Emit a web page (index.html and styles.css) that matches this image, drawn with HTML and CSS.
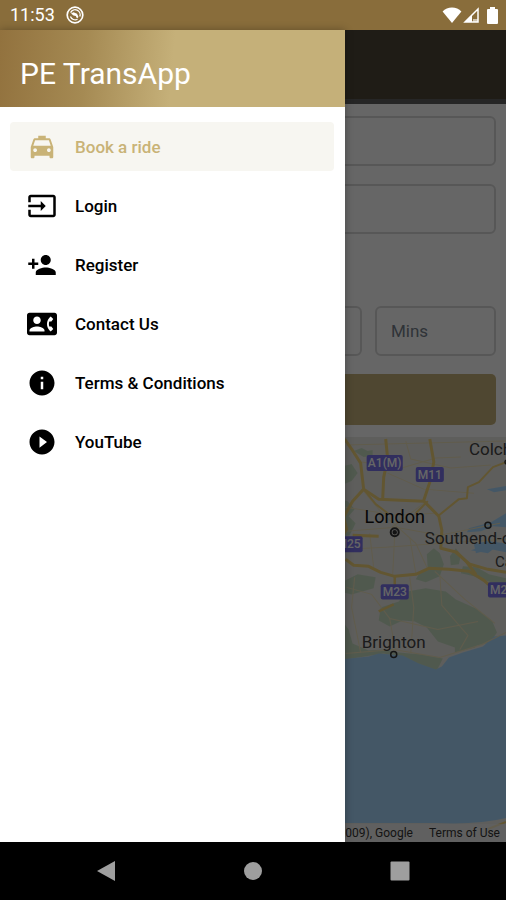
FILE: index.html
```html
<!DOCTYPE html>
<html lang="en">
<head>
<meta charset="UTF-8">
<meta name="viewport" content="width=device-width, initial-scale=1.0">
<title>PE TransApp</title>
<link rel="stylesheet" href="styles.css">
</head>
<body>
<div class="status-bar">
    <span class="time">11:53</span>
    <svg class="status-app" viewBox="0 0 18 18" width="18" height="18">
        <circle cx="9" cy="9" r="7.8" fill="none" stroke="#fff" stroke-width="1.7"/>
        <path d="M4.6 6.600A5 5 0 0 1 13.800 10.500M11.500 13.200A5 5 0 0 1 4.400 10.500" fill="none" stroke="#fff" stroke-width="1.3"/>
        <path d="M5 7.500l2.500-1.200 3.500 1.500 1.500 3.200-1.500 1.500-1.200-2.500-2.300-.5z" fill="#fff"/>
    </svg>
    <div class="status-icons">
        <svg viewBox="0 0 20 16" width="20" height="16"><path d="M10 16L.6 4.6C3 2.2 6.300 .6 10 .6s7 1.600 9.400 4z" fill="#fff"/></svg>
        <svg viewBox="0 0 16 16" width="16" height="16">
            <path d="M15 2v13H2z" fill="none" stroke="#fff" stroke-width="1.500"/>
            <path d="M9 8v7H2z" fill="#fff"/>
            <path d="M10 12h5v3h-5z" fill="#fff" opacity=".6"/>
        </svg>
        <svg class="battery" viewBox="0 0 11 17" width="11" height="17"><path d="M3 0h5v2h2q1 0 1 1v13q0 1-1 1H1q-1 0-1-1V3q0-1 1-1h2z" fill="#fff"/></svg>
    </div>
</div>

<div class="stage">
    <div class="page">
        <header class="page-header"></header>
        <form class="booking">
            <input type="text" aria-label="Pick up address">
            <input type="text" aria-label="Drop off address">
            <div class="when">
                <input type="text" aria-label="Date">
                <input type="text" aria-label="Hours">
                <input type="text" aria-label="Minutes" placeholder="Mins">
            </div>
            <button type="button" class="book-btn" aria-label="Book"></button>
        </form>
        <div class="map">
            <svg class="map-canvas" viewBox="0 0 506 404" preserveAspectRatio="xMaxYMin slice">
                <rect width="506" height="404" fill="#ebebe6"/>
                <!-- parks and downs -->
                <g fill="#c9dfc4">
                    <path d="M354 14l8-3 6 3 5-1v6l-9 1z"/>
                    <path d="M340 30l12-3 6 9-6 8-12 5zM340 62l8 2 7 8-6 7 7 7-6 12-10 2z"/>
                    <path d="M427 117l7-6 6 5 4 11-4 12-14 6-10-3 4-7 8-2zM450 119l6-8 5 7-2 9-8 1z"/>
                    <path d="M340 146l18-9 18 3-2 11-22 6-12-3z"/>
                    <path d="M381 170l18-6 8-10 19-3 20 3 10 8 20 9 16 12 5 12-7 10-17 4-18 1-17-6-11-14-12-6-12-1-13 6-11-6z"/>
                    <path d="M463 129l14 1 12 7 17 4v8l-18-5-14-5-13-3z"/>
                    <path d="M340 180l9 12 4 14 16 7 15-1 15 3 23 2 21 4-6 12-16-4-18-9-19-4-44 7zM455 208l28-6-8 8-20 5z"/>
                </g>
                <!-- sea and estuaries -->
                <g fill="#aadaff">
                    <path d="M0 226l340-4 29-3 10-3 24 2 16 8 17 6 6-3 7-9 14-5 20-6 11-10 12-1v182q-28 7-70 5H0z"/>
                    <path d="M506 49l-19 3 7 3 12-2zM506 76l-15 9-22 6-2 4 14-1 12-5 13 1zM474 107l13-3 19 2v9l-15-3-15 4zM471 113l6-2 16 1-5 4z"/>
                </g>
                <!-- minor roads -->
                <g fill="none" stroke="#f1e5bd" stroke-width="1">
                    <path d="M346 8l160-4M362 25l40 6 34-10 25-1M406 4l5 18 40 9 40-3M388 36l36 16 50 4"/>
                    <path d="M346 70l50 8 40-2M364 54l20 24 14 12 18 16 12 26M424 66l-18 14-14 10M346 94l50-4 44 8 60-12"/>
                    <path d="M395 97l-2 40M370 96l4 34M346 112l40-2 56-4 64-4M410 100l6 36"/>
                    <path d="M347 150l25 7 18 24 6 34M355 140l-3 30 9 45M410 140l4 30-3 46M440 138l2 30 26 30-8 14M390 181l48 11 40-8M435 134l30 28 30 24"/>
                    <path d="M346 216l48-4 46 8 42-13 24-12"/>
                </g>
                <!-- motorways -->
                <g fill="none" stroke="#f5d67c" stroke-width="3" stroke-linejoin="round">
                    <path d="M345 2l7 10 9 14 3 26 15 10 22 1 23 1 15 15 3 14-1 18 16 4 10 10 9 12"/>
                    <path d="M386 2l2 20-4 18-1 22M430 2l4 23-4 20-6 18"/>
                    <path d="M346 122l8 6 15 1 12 6 14 4 21-2 13-6 20 1 20 2 15 9 9 8"/>
                    <path d="M456 115l14 12 18 5 18 3M364 52l-11 12-9 16 3 12-6 10M353 98l26 1"/>
                    <path d="M395 139v14M394 167l-15 7" stroke-width="2.500"/>
                    <path d="M438 79l21-17 8-1 1-11 11-5 14-15 13-5M364 52l12 15 12 9M428 64l-12 12" stroke-width="2"/>
                    <path d="M488 391l18-7" stroke-width="2"/>
                </g>
                <g class="shields">
                    <rect x="367" y="18" width="36" height="16" rx="2"/><text x="385" y="30">A1(M)</text>
                    <rect x="416" y="30" width="28" height="15" rx="2"/><text x="430" y="42">M11</text>
                    <rect x="334" y="99" width="29" height="16" rx="2"/><text x="349" y="111">M25</text>
                    <rect x="381" y="147" width="28" height="15" rx="2"/><text x="395" y="159">M23</text>
                    <rect x="488" y="145" width="28" height="15" rx="2"/><text x="502" y="157">M20</text>
                </g>
                <g class="places">
                    <text class="city" x="395" y="86">London</text>
                    <text x="394" y="210">Brighton</text>
                    <text class="from-left" x="469" y="18">Colchester</text>
                    <text class="from-left" x="425" y="107">Southend-on-Sea</text>
                    <text class="from-left town" x="495" y="130">Canterbury</text>
                </g>
                <g fill="none" stroke="#333" stroke-width="1.500">
                    <circle cx="395" cy="95" r="4" stroke-width="2"/>
                    <circle cx="395" cy="95" r="1.500" fill="#333"/>
                    <circle cx="488" cy="88" r="3"/>
                    <circle cx="394" cy="217" r="3"/>
                    <circle cx="507" cy="25" r="2"/>
                </g>
            </svg>
            <div class="map-legal">
                <span>Map data ©2021 GeoBasis-DE/BKG (©2009), Google</span>
                <a href="#">Terms of Use</a>
            </div>
        </div>
    </div>

    <div class="scrim"></div>

    <aside class="drawer">
        <h1 class="drawer-title">PE TransApp</h1>
        <nav class="menu">
            <a href="#" class="menu-item active">
                <svg viewBox="0 0 24 24"><path d="M18.920 6.010C18.720 5.420 18.160 5 17.500 5H15V3H9v2H6.500c-.660 0-1.210.420-1.420 1.010L3 12v8c0 .550.450 1 1 1h1c.550 0 1-.450 1-1v-1h12v1c0 .550.450 1 1 1h1c.550 0 1-.450 1-1v-8l-2.080-5.990zM6.500 16c-.830 0-1.500-.670-1.500-1.500S5.670 13 6.500 13s1.500.670 1.500 1.500S7.330 16 6.500 16zm11 0c-.830 0-1.500-.670-1.500-1.500s.670-1.500 1.500-1.500 1.500.670 1.500 1.500-.670 1.500-1.500 1.500zM5 11l1.500-4.500h11L19 11H5z"/></svg>
                <span>Book a ride</span>
            </a>
            <a href="#" class="menu-item">
                <svg viewBox="0 0 24 24"><path d="M21 3.010H3c-1.100 0-2 .9-2 2V9h2V4.990h18v14.030H3V15H1v4.010c0 1.100.9 1.980 2 1.980h18c1.100 0 2-.880 2-1.980v-14c0-1.110-.9-2-2-2zM11 16l4-4-4-4v3H1v2h10v3z"/></svg>
                <span>Login</span>
            </a>
            <a href="#" class="menu-item">
                <svg viewBox="0 0 24 24"><path d="M15 12c2.210 0 4-1.790 4-4s-1.790-4-4-4-4 1.790-4 4 1.790 4 4 4zm-9-2V7H4v3H1v2h3v3h2v-3h3v-2H6zm9 4c-2.670 0-8 1.340-8 4v2h16v-2c0-2.660-5.330-4-8-4z"/></svg>
                <span>Register</span>
            </a>
            <a href="#" class="menu-item">
                <svg viewBox="0 0 24 24"><path d="M22 3H2C.9 3 0 3.900 0 5v14c0 1.100.9 2 2 2h20c1.100 0 1.990-.9 1.990-2L24 5c0-1.100-.9-2-2-2zM8 6c1.660 0 3 1.340 3 3s-1.340 3-3 3-3-1.340-3-3 1.340-3 3-3zm6 12H2v-1c0-2 4-3.100 6-3.100s6 1.100 6 3.100v1zm3.850-4h1.640L21 16l-1.990 1.990c-1.310-.980-2.280-2.380-2.730-3.990-.180-.640-.280-1.310-.280-2s.1-1.360.280-2c.450-1.620 1.420-3.010 2.730-3.990L21 8l-1.510 2h-1.640c-.220.630-.350 1.300-.350 2s.130 1.370.350 2z"/></svg>
                <span>Contact Us</span>
            </a>
            <a href="#" class="menu-item">
                <svg viewBox="0 0 24 24"><path d="M12 2C6.480 2 2 6.480 2 12s4.480 10 10 10 10-4.480 10-10S17.520 2 12 2zm1 15h-2v-6h2v6zm0-8h-2V7h2v2z"/></svg>
                <span>Terms &amp; Conditions</span>
            </a>
            <a href="#" class="menu-item">
                <svg viewBox="0 0 24 24"><path d="M12 2C6.480 2 2 6.480 2 12s4.480 10 10 10 10-4.480 10-10S17.520 2 12 2zm-2 14.500v-9l6 4.500-6 4.500z"/></svg>
                <span>YouTube</span>
            </a>
        </nav>
    </aside>
</div>

<div class="nav-bar">
    <button type="button" aria-label="Back"><svg viewBox="0 0 20 20"><path d="M1 10L19 0v20z"/></svg></button>
    <button type="button" aria-label="Home"><svg viewBox="0 0 20 20"><circle cx="10" cy="10" r="9"/></svg></button>
    <button type="button" aria-label="Recent apps"><svg viewBox="0 0 20 20"><rect x="0.500" y="0.500" width="19" height="19" rx="1"/></svg></button>
</div>
</body>
</html>
```
FILE: styles.css
```css
* {
    box-sizing: border-box;
}

body {
    font-family: Roboto, Arial, sans-serif;
    margin: 0;
    height: 100vh;
    display: flex;
    flex-direction: column;
    background-color: #000;
    overflow: hidden;
}

.status-bar {
    display: flex;
    align-items: center;
    height: 30px;
    padding: 0 8px 0 10px;
    background-color: #896d3b;
    color: #fff;
    flex-shrink: 0;
}

.time {
    font-size: 18px;
    line-height: 30px;
}

.status-app {
    margin-left: 11px;
}

.status-icons {
    display: flex;
    align-items: center;
    gap: 1px;
    margin-left: auto;
}

.battery {
    margin-left: 7px;
}

.stage {
    position: relative;
    flex: 1;
    min-height: 0;
}

/* page behind the menu */
.page {
    display: flex;
    flex-direction: column;
    height: 100%;
    background-color: #fff;
}

.page-header {
    height: 74px;
    background-color: #4e4637;
    border-bottom: 5px solid #606060;
    flex-shrink: 0;
}

.booking {
    display: flex;
    flex-direction: column;
    gap: 18px;
    padding: 12px 10px;
}

.booking input {
    width: 100%;
    height: 50px;
    padding: 0 14px;
    border: 2px solid #dadada;
    border-radius: 6px;
    background-color: #fff;
    font-family: inherit;
    font-size: 17px;
}

.booking input::placeholder {
    color: #76808c;
    opacity: 1;
}

.when {
    display: grid;
    grid-template-columns: 9fr 5fr 5fr;
    gap: 13px;
    margin-top: 54px;
}

.book-btn {
    height: 51px;
    border: none;
    border-radius: 5px;
    background-color: #c6b27a;
}

.map {
    position: relative;
    flex: 1;
    min-height: 0;
    overflow: hidden;
}

.map-canvas {
    display: block;
    width: 100%;
    height: 100%;
}

.shields rect {
    fill: #7a73ec;
}

.shields text {
    fill: #fff;
    font-size: 12px;
    font-weight: 500;
    text-anchor: middle;
}

.places text {
    fill: #444;
    font-size: 17px;
    text-anchor: middle;
}

.places .city {
    fill: #111;
    font-size: 18px;
}

.places .town {
    font-size: 15px;
}

.places .from-left {
    text-anchor: start;
}

.map-legal {
    position: absolute;
    right: 0;
    bottom: 0;
    display: flex;
    gap: 16px;
    padding: 0 6px;
    font-size: 12px;
    line-height: 18px;
    white-space: nowrap;
    color: #333;
    background-color: rgba(245, 245, 245, 0.6);
}

.map-legal a {
    color: #333;
    text-decoration: none;
}

.scrim {
    position: absolute;
    inset: 0;
    background-color: rgba(0, 0, 0, 0.6);
}

/* side menu */
.drawer {
    position: absolute;
    top: 0;
    bottom: 0;
    left: 0;
    width: 345px;
    max-width: 85%;
    background-color: #fff;
    box-shadow: 0 0 8px rgba(0, 0, 0, 0.3);
}

.drawer-title {
    margin: 0;
    padding: 10px 20px 0;
    height: 77px;
    font-size: 30px;
    font-weight: 400;
    line-height: 67px;
    color: #fff;
    background: linear-gradient(95deg, #92723e 0%, #a58a53 25%, #c5b079 50%, #c5b079 100%);
}

.menu {
    display: flex;
    flex-direction: column;
    gap: 10px;
    padding: 15px 11px 15px 10px;
}

.menu-item {
    display: flex;
    align-items: center;
    gap: 18px;
    height: 49px;
    padding: 0 17px;
    border-radius: 4px;
    color: #000;
    font-size: 17px;
    font-weight: 500;
    text-decoration: none;
}

.menu-item svg {
    width: 30px;
    height: 30px;
    fill: currentColor;
}

.menu-item.active {
    color: #c9b377;
    background-color: #f7f6f1;
}

.nav-bar {
    display: grid;
    grid-template-columns: repeat(3, 1fr);
    height: 58px;
    padding: 0 32px;
    background-color: #000;
    flex-shrink: 0;
}

.nav-bar button {
    display: flex;
    align-items: center;
    justify-content: center;
    padding: 0;
    border: none;
    background: none;
}

.nav-bar svg {
    width: 20px;
    height: 20px;
    fill: #9e9e9e;
}
```
